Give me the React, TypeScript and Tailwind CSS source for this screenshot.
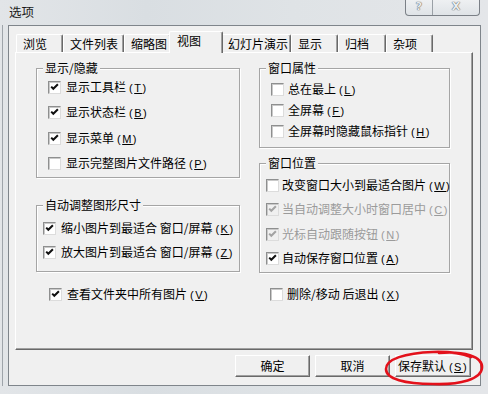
import React from "react";

const CJK = "font-['Noto_Sans_CJK_SC','Liberation_Sans',sans-serif]";

function Check({ checked, disabled }: { checked?: boolean; disabled?: boolean }) {
  return (
    <span
      className={`w-[13px] h-[13px] shrink-0 flex items-center justify-center border border-t-[#8e8f8f] border-l-[#8e8f8f] border-r-[#dcdcdc] border-b-[#dcdcdc] shadow-[inset_1px_1px_0_#c9c9c9] ${
        disabled ? "bg-[#f0f0f0]" : "bg-white"
      }`}
    >
      {checked && (
        <svg width="9" height="9" viewBox="0 0 9 9">
          <path
            d="M1.2 3.6 L3.3 5.8 L7.9 1.2"
            stroke={disabled ? "#a3a3a3" : "#111"}
            strokeWidth="2"
            fill="none"
          />
        </svg>
      )}
    </span>
  );
}

function Shortcut({ k }: { k: string }) {
  return (
    <span className="ml-[3px] font-['Liberation_Sans',sans-serif] text-[11px] tracking-[1.5px]">
      (<u className="underline-offset-[1px]">{k}</u>)
    </span>
  );
}

function Row({
  label,
  k,
  checked,
  disabled,
  h,
  indent,
  gap = 5,
}: {
  label: string;
  k: string;
  checked?: boolean;
  disabled?: boolean;
  h: string;
  indent: string;
  gap?: number;
}) {
  return (
    <div className={`flex items-center ${h} ${indent}`}>
      <Check checked={checked} disabled={disabled} />
      <span
        className={`whitespace-pre text-[12px] leading-[16px] ${
          disabled ? "text-[#9b9b9b]" : "text-black"
        }`}
        style={{ marginLeft: gap }}
      >
        {label}
        <Shortcut k={k} />
      </span>
    </div>
  );
}

function Group({
  title,
  h,
  pt,
  children,
}: {
  title: string;
  h: string;
  pt: string;
  children: React.ReactNode;
}) {
  return (
    <div
      className={`relative ${h} ${pt} border border-[#a5a5a5] shadow-[1px_1px_0_#ffffff,inset_1px_1px_0_#ffffff]`}
    >
      <span className="absolute -top-[9px] left-[6px] px-[2px] bg-[#f0f0f0] text-[12px] leading-[16px] text-black">
        {title}
      </span>
      {children}
    </div>
  );
}

const tabs = [
  { t: "浏览", w: "w-[47px]" },
  { t: "文件列表", w: "w-[61px]" },
  { t: "缩略图", w: "w-[47px]" },
  { t: "视图", w: "w-[54px]", sel: true },
  { t: "幻灯片演示", w: "w-[70px]" },
  { t: "显示", w: "w-[47px]" },
  { t: "归档", w: "w-[48px]" },
  { t: "杂项", w: "w-[47px]" },
];

function Button({ label, k, w }: { label: string; k?: string; w: string }) {
  return (
    <div
      className={`${w} h-[22px] flex items-center justify-center bg-[#f0f0f0] border border-t-white border-l-white border-r-[#696969] border-b-[#696969] shadow-[inset_-1px_-1px_0_#a0a0a0] text-[12px] leading-[16px] text-black`}
    >
      <span className="whitespace-pre">
        {label}
        {k && <Shortcut k={k} />}
      </span>
    </div>
  );
}

export default function App() {
  return (
    <div
      className={`relative w-[488px] h-[394px] overflow-hidden bg-[linear-gradient(90deg,#e2e5e8_0%,#d9dee2_30%,#dfe3e6_60%,#e4e6e9_100%)] ${CJK}`}
    >
      {/* title bar */}
      <div className="h-[25px] flex items-start">
        <span className="mt-[4px] ml-[9px] text-[12.5px] leading-[16px] text-[#1b1b1b]">选项</span>
        <div className="flex-1" />
        <div className="flex mr-[8px] h-[16px] border border-t-0 border-[#7b8087] rounded-b-[4px] bg-[linear-gradient(180deg,#eef0f2,#dfe3e7)] overflow-hidden">
          <div className="w-[27px] flex items-center justify-center border-r border-[#9aa0a6] font-['DejaVu_Sans',sans-serif] text-[11px] font-bold text-[#e9ecef] [text-shadow:0_0_1px_#555,0_0_1px_#555]">
            ?
          </div>
          <div className="w-[46px] flex items-center justify-center font-['DejaVu_Sans',sans-serif] text-[11px] font-bold text-[#e9ecef] [text-shadow:0_0_1px_#555,0_0_1px_#555]">
            X
          </div>
        </div>
      </div>

      {/* body */}
      <div className="flex h-[361px]">
        <div className="w-[8px] relative">
          <div className="absolute left-[2px] top-0 bottom-0 w-[1px] bg-[#9ea4aa]" />
        </div>
        <div className="w-[473px] h-[361px] border border-[#7f858b] bg-[#f0f0f0] pt-[5px] pl-[6px] flex flex-col">
          {/* tabs */}
          <div className="flex items-end h-[21px] pl-[1px]">
            {tabs.map((tb) =>
              tb.sel ? (
                <div
                  key={tb.t}
                  className={`${tb.w} -mx-[2px] h-[22px] -mb-[1px] relative z-10 bg-[#f0f0f0] border border-b-0 border-t-white border-l-white border-r-[#696969] shadow-[inset_-1px_0_0_#a0a0a0] rounded-t-[2px] pl-[7px] pt-[1px] text-[12px] leading-[16px] text-black`}
                >
                  {tb.t}
                </div>
              ) : (
                <div
                  key={tb.t}
                  className={`${tb.w} h-[18px] bg-[#f0f0f0] border border-b-0 border-t-white border-l-white border-r-[#696969] shadow-[inset_-1px_0_0_#a0a0a0] rounded-t-[2px] pl-[6px] pt-[1px] text-[12px] leading-[16px] text-black`}
                >
                  {tb.t}
                </div>
              )
            )}
          </div>

          {/* panel */}
          <div className="w-[458px] h-[298px] border border-t-white border-l-white border-r-[#696969] border-b-[#696969] shadow-[inset_-1px_-1px_0_#a0a0a0] pl-[20px] pt-[15px] flex gap-[19px]">
            {/* left column */}
            <div className="w-[204px] flex flex-col">
              <Group title="显示/隐藏" h="h-[110px]" pt="pt-[6px]">
                <Row label="显示工具栏" k="T" checked h="h-[25px]" indent="pl-[11px]" />
                <Row label="显示状态栏" k="B" checked h="h-[25px]" indent="pl-[11px]" />
                <Row label="显示菜单" k="M" checked h="h-[26px]" indent="pl-[11px]" />
                <Row label="显示完整图片文件路径" k="P" h="h-[25px]" indent="pl-[11px]" />
              </Group>
              <div className="h-[27px]" />
              <Group title="自动调整图形尺寸" h="h-[67px]" pt="pt-[10px]">
                <Row label="缩小图片到最适合 窗口/屏幕" k="K" checked h="h-[24px]" indent="pl-[6px]" />
                <Row label="放大图片到最适合 窗口/屏幕" k="Z" checked h="h-[24px]" indent="pl-[6px]" />
              </Group>
              <div className="h-[14px]" />
              <Row label="查看文件夹中所有图片" k="V" checked h="h-[16px]" indent="pl-[13px]" />
            </div>

            {/* right column */}
            <div className="w-[191px] flex flex-col">
              <Group title="窗口属性" h="h-[80px]" pt="pt-[10px]">
                <Row label="总在最上" k="L" h="h-[21px]" indent="pl-[11px]" gap={4} />
                <Row label="全屏幕" k="F" h="h-[21px]" indent="pl-[11px]" gap={4} />
                <Row label="全屏幕时隐藏鼠标指针" k="H" h="h-[21px]" indent="pl-[11px]" gap={4} />
              </Group>
              <div className="h-[15px]" />
              <Group title="窗口位置" h="h-[110px]" pt="pt-[9px]">
                <Row label="改变窗口大小到最适合图片" k="W" h="h-[24px]" indent="pl-[6px]" gap={3} />
                <Row label="当自动调整大小时窗口居中" k="C" checked disabled h="h-[25px]" indent="pl-[6px]" gap={3} />
                <Row label="光标自动跟随按钮" k="N" checked disabled h="h-[24px]" indent="pl-[6px]" gap={3} />
                <Row label="自动保存窗口位置" k="A" checked h="h-[24px]" indent="pl-[6px]" gap={3} />
              </Group>
              <div className="h-[13px]" />
              <Row label="删除/移动 后退出" k="X" h="h-[16px]" indent="pl-[11px]" gap={4} />
            </div>
          </div>

          {/* buttons */}
          <div className="flex justify-end gap-[5px] pr-[9px] mt-[5px]">
            <Button label="确定" w="w-[75px]" />
            <Button label="取消" w="w-[75px]" />
            <Button label="保存默认" k="S" w="w-[76px]" />
          </div>
        </div>
        <div className="flex-1" />
      </div>
      <div className="h-[8px]" />

      {/* red hand-drawn ellipse annotation */}
      <svg
        className="absolute left-[381px] top-[348px]"
        width="106"
        height="40"
        viewBox="0 0 106 40"
      >
        <path
          d="M58 5 C82 3 102 8 101 20 C100 31 80 37 52 36 C24 36 5 31 5 21 C5 11 24 5 52 4 C68 3.5 80 5 90 9"
          stroke="#e3111b"
          strokeWidth="2.6"
          fill="none"
          strokeLinecap="round"
        />
      </svg>
    </div>
  );
}
